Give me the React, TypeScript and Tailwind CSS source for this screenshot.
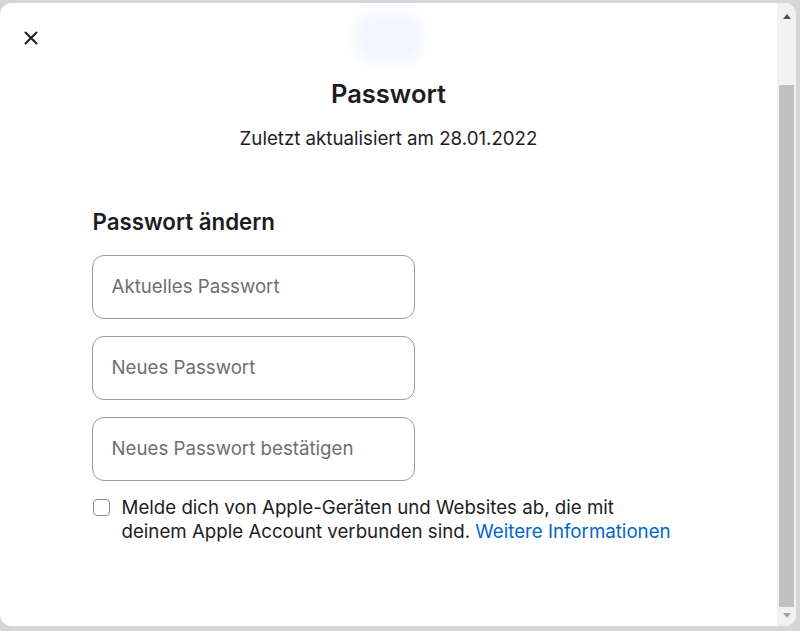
import React from "react";

const fields = ["Aktuelles Passwort", "Neues Passwort", "Neues Passwort bestätigen"];

const App = () => {
  return (
    <div
      className="w-[800px] h-[631px] bg-[#d6d5da] pt-[3px] pr-[4px] pb-[5px] overflow-hidden"
      style={{ fontFamily: "Inter, 'Noto Sans', sans-serif" }}
    >
      <div className="relative h-full bg-white rounded-[12px] flex overflow-hidden">
        {/* Inhalt */}
        <div className="flex-1 relative">
          {/* schließen */}
          <button className="absolute left-[24px] top-[28px] w-[14px] h-[14px] text-[#1d1d1f]">
            <svg viewBox="0 0 14 14" className="w-[14px] h-[14px]">
              <path d="M1.5 1.5 L12.5 12.5 M12.5 1.5 L1.5 12.5" stroke="currentColor" strokeWidth="2" strokeLinecap="round" />
            </svg>
          </button>

          {/* verblasstes Symbol */}
          <div className="flex justify-center pt-[10px]">
            <div className="w-[70px] h-[50px] rounded-[20px] bg-[#f1f6ff] blur-[7px]" />
          </div>

          <h1 className="mt-[15px] text-center text-[25.5px] leading-[32px] font-semibold text-[#1d1d1f]">
            Passwort
          </h1>
          <p className="mt-[17px] text-center text-[18.7px] leading-[24px] text-[#1d1d1f]">
            Zuletzt aktualisiert am 28.01.2022
          </p>

          <div className="w-[594px] mx-auto mt-[57px]">
            <h2 className="text-[22.3px] leading-[28px] font-semibold text-[#1d1d1f] pl-[1px]">
              Passwort ändern
            </h2>
            <div className="mt-[19px] flex flex-col gap-[17px]">
              {fields.map((f) => (
                <div
                  key={f}
                  className="w-[323px] h-[64px] border border-[#9a9a9f] rounded-[12px] flex items-center px-[19px] text-[18.7px] text-[#6e6e73]"
                >
                  {f}
                </div>
              ))}
            </div>
            <div className="mt-[15px] flex items-start gap-[12px]">
              <div className="mt-[3px] ml-[1px] w-[17px] h-[17px] shrink-0 border border-[#8e8e93] rounded-[4px] bg-white" />
              <p className="text-[18.7px] leading-[24px] text-[#1d1d1f]">
                Melde dich von Apple-Geräten und Websites ab, die mit
                <br />
                deinem Apple Account verbunden sind.{" "}
                <span className="text-[#0066cc]">Weitere Informationen</span>
              </p>
            </div>
          </div>
        </div>

        {/* Scrollleiste */}
        <div className="w-[19px] h-full bg-[#f1f1f1] flex flex-col items-center">
          <div className="h-[82px] w-full flex justify-center pt-[11px]">
            <svg viewBox="0 0 8 5" className="w-[8px] h-[5px]">
              <path d="M0 5 L4 0 L8 5 Z" fill="#505050" />
            </svg>
          </div>
          <div className="flex-1 w-[15px] bg-[#c1c1c1]" />
          <div className="h-[19px] w-full flex justify-center pt-[6px]">
            <svg viewBox="0 0 8 5" className="w-[8px] h-[5px]">
              <path d="M0 0 L4 5 L8 0 Z" fill="#a3a3a3" />
            </svg>
          </div>
        </div>
      </div>
    </div>
  );
};

export default App;
